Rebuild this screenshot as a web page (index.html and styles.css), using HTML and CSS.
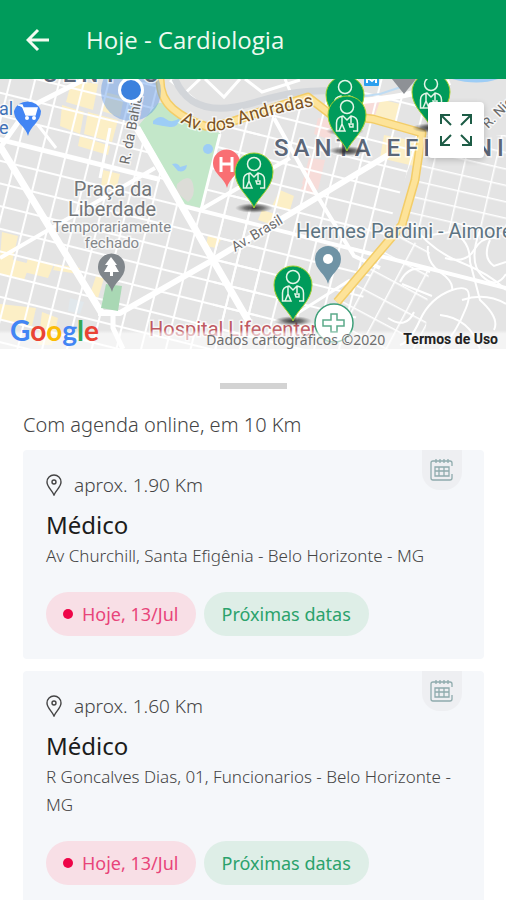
FILE: index.html
```
<!DOCTYPE html>
<html lang="pt-BR">
<head>
    <meta charset="UTF-8">
    <meta name="viewport" content="width=device-width, initial-scale=1.0">
    <title>Hoje - Cardiologia</title>
    <link rel="stylesheet" href="styles.css">
</head>
<body>

<header class="topbar">
    <button type="button" class="back" aria-label="Voltar">
        <svg width="24" height="24" viewBox="0 0 24 24"><path d="M23 12H2M12 2L2 12l10 10" fill="none" stroke="#f3fbf0" stroke-width="3"/></svg>
    </button>
    <h1>Hoje - Cardiologia</h1>
</header>

<section class="map">
    <svg class="map-canvas" viewBox="0 79 506 270" preserveAspectRatio="xMidYMid slice">
        <defs>
            <pattern id="blocks" width="24" height="22" patternUnits="userSpaceOnUse" patternTransform="translate(4 2) rotate(14)">
                <path d="M0 0H24M0 0V22" fill="none" stroke="#fff" stroke-width="4"/>
            </pattern>
            <pattern id="blocksEast" width="30" height="16" patternUnits="userSpaceOnUse" patternTransform="translate(8 4) rotate(13)">
                <path d="M0 0H30M0 0V16" fill="none" stroke="#fff" stroke-width="3"/>
            </pattern>
            <pattern id="blocksSouth" width="24" height="21" patternUnits="userSpaceOnUse" patternTransform="rotate(28)">
                <path d="M0 0H24M0 0V21" fill="none" stroke="#fff" stroke-width="3"/>
            </pattern>
            <radialGradient id="shade">
                <stop offset="0" stop-color="#222" stop-opacity="0.9"/>
                <stop offset="0.5" stop-color="#333" stop-opacity="0.6"/>
                <stop offset="1" stop-color="#555" stop-opacity="0"/>
            </radialGradient>
            <g id="doctor">
                <ellipse cx="0" cy="0" rx="19" ry="5" fill="url(#shade)"/>
                <path d="M0 0C-3 -10 -19 -20 -19 -36A19 19 0 0 1 19 -36C19 -20 3 -10 0 0Z" fill="#009b5b" stroke="#a5d02c" stroke-width="1"/>
                <g fill="none" stroke="#e4f6e8" stroke-width="1.5">
                    <circle cx="0" cy="-44" r="6.5"/>
                    <path d="M-6 -20H-10.500V-28Q-10.500 -34 -4 -35L0 -31L4 -35Q10.500 -34 10.500 -28V-20H6M-5 -34V-27L-8 -20M-5 -27L-2 -20H-8M4 -34V-28M2 -27H6V-24H3Z"/>
                </g>
            </g>
        </defs>

        <rect x="0" y="79" width="506" height="270" fill="#e4e4e4"/>

        <!-- commercial and hospital areas -->
        <g fill="#fcefc6">
            <path d="M72 80L98 84L93 110L66 102ZM62 105L84 112L80 134L60 126ZM88 112L118 120L112 142L84 134ZM105 92L124 97L120 117L102 111ZM80 136L110 146L108 155L78 146ZM103 170L120 174L116 190L101 187Z"/>
            <path d="M2 232L18 236L12 262L0 258ZM0 256L30 264L24 280L0 274ZM28 258L54 264L48 278L24 272ZM0 304L36 308L32 326L0 320ZM55 264L80 268L78 274L53 270ZM96 276L104 278L98 298L90 294ZM42 312L58 318L52 345L38 345Z"/>
            <path d="M375 98L400 104L394 124L370 118ZM384 135L420 142L414 166L380 158ZM280 190L294 196L290 210L272 206ZM262 210L275 214L270 224L258 220ZM208 235L222 238L216 248L206 246ZM345 95L372 98L366 112L345 108Z"/>
        </g>
        <g fill="#f7dcd9">
            <path d="M309 158L325 160L318 190L302 184ZM318 118L334 121L330 140L314 134ZM366 98L380 101L374 118L364 115ZM309 175L318 180L314 195L300 190Z"/>
        </g>
        <path d="M70 298L84 302L80 314L68 311Z" fill="#e1e8ec"/>

        <rect x="0" y="79" width="260" height="270" fill="url(#blocks)"/>
        <path d="M213 260L260 79H440L345 349H213Z" fill="url(#blocks)"/>
        <path d="M423 135H506V240L402 224Z" fill="url(#blocksEast)"/>
        <path d="M400 235L430 250L425 349H345L335 303Z" fill="url(#blocksSouth)"/>
        <path d="M160 79H340V98L300 100L215 124L187 118L165 95Z" fill="#e4e4e4"/>

        <!-- winding streets on the hillside -->
        <g fill="none" stroke="#fff" stroke-width="2">
            <path d="M410 222Q430 250 460 262T506 290M428 246Q426 262 440 272T452 290Q430 298 420 320T400 345"/>
            <path d="M445 258Q466 264 474 250T496 238M470 262L480 300Q500 318 494 330M452 290Q476 282 466 308T440 349"/>
            <path d="M480 230Q468 262 482 276T506 274M490 240Q482 258 494 266L506 262M430 272Q410 262 400 282M414 312Q406 330 388 318"/>
            <path d="M402 284L432 296M440 315Q470 318 480 349M462 300Q486 292 506 304M425 236L450 232Q470 238 470 262"/>
        </g>
        <g fill="none" stroke="#fff" stroke-width="3">
            <path d="M170 80L200 104M182 96L200 79M205 79L224 97L240 79M245 79L262 92L300 80M285 79L292 96"/>
        </g>

        <!-- park -->
        <path d="M139 125L158 103H168L187 123L220 133L201 208L184 204Z" fill="#c3e7c9"/>
        <path d="M177 184Q190 172 193 184T188 202L176 192Z" fill="#dcdcd7"/>
        <g fill="#9dcdf6">
            <path d="M153 121Q160 114 166 119T180 118Q178 128 170 127T153 124ZM172 164Q178 162 180 167L187 165Q186 173 178 171Z"/>
            <circle cx="208" cy="149" r="5"/>
            <path d="M452 79H498Q478 86 452 79Z"/>
        </g>

        <!-- river -->
        <path d="M175 79C185 103 205 112 235 107S290 86 350 92" fill="none" stroke="#d2d5d9" stroke-width="7"/>
        <path d="M350 102Q410 98 450 82" fill="none" stroke="#fff" stroke-width="6"/>
        <path d="M350 98L380 94L425 79" fill="none" stroke="#bfdcf3" stroke-width="2"/>

        <!-- avenues -->
        <g fill="none" stroke="#fff" stroke-linejoin="round">
            <path d="M0 146L101 312M137 128L213 260L249 322" stroke-width="7"/>
            <path d="M98 313H120L213 260L388 155" stroke-width="6"/>
            <path d="M113 314V328L123 349M0 148L28 108L85 79" stroke-width="5"/>
            <path d="M0 258L155 168M0 140L160 180M200 210L290 158" stroke-width="4"/>
            <path d="M183 206L506 288M274 118L318 197L354 256L380 268" stroke-width="4"/>
            <path d="M220 134L201 210M110 128L100 178M38 125L56 148M290 318L350 280" stroke-width="3"/>
        </g>
        <path d="M106 284L122 286L118 311L101 308Z" fill="#a9d8b4"/>
        <g fill="none" stroke-linejoin="round">
            <path d="M160 79Q160 98 173 109T205 126Q218 128 253 114L308 97L330 114L373 119L422 133L415 180L402 225L337 302" stroke="#f3cd68" stroke-width="9"/>
            <path d="M160 79Q160 98 173 109T205 126Q218 128 253 114L308 97L330 114L373 119L422 133L415 180L402 225L337 302" stroke="#fde399" stroke-width="6"/>
        </g>

        <!-- own position -->
        <circle cx="131" cy="91" r="30" fill="#4a8be8" fill-opacity="0.4"/>

        <g class="label">
            <text x="42" y="82" class="district">CENTRO</text>
            <text x="-7" y="115" class="shop">tal</text>
            <text x="-1" y="134" class="shop">e</text>
            <text x="113" y="196" class="place" text-anchor="middle">Praça da</text>
            <text x="112" y="216" class="place" text-anchor="middle">Liberdade</text>
            <text x="112" y="232" class="note" text-anchor="middle">Temporariamente</text>
            <text x="112" y="248" class="note" text-anchor="middle">fechado</text>
            <text x="274" y="156" class="district">SANTA EFIGÊNIA</text>
            <text x="296" y="238" class="clinic">Hermes Pardini - Aimorés</text>
            <text x="149" y="336" class="hospital">Hospital Lifecenter</text>
            <text class="street" transform="translate(129 165) rotate(-79)">R. da Bahia</text>
            <text class="street" transform="translate(235 252) rotate(-31)">Av. Brasil</text>
            <text class="street" transform="translate(488 129) rotate(-45)">R. Niquelina</text>
            <path id="andradas" d="M180 122Q204 138 236 126T320 105" fill="none"/>
            <text class="avenue"><textPath href="#andradas">Av. dos Andradas</textPath></text>
        </g>

        <circle cx="131" cy="90" r="13" fill="#fff"/>
        <circle cx="131" cy="90" r="10" fill="#3b81de"/>

        <!-- places -->
        <path d="M28 136C26 126 14 122 14 111A14 13 0 0 1 41 111C41 122 30 126 28 136Z" fill="#4285f4"/>
        <path d="M18 105H22L26 115H35L37 108H23" fill="#fff" stroke="#fff" stroke-width="1.500"/>
        <circle cx="27" cy="118" r="2" fill="#fff"/><circle cx="34" cy="118" r="2" fill="#fff"/>
        <path d="M227 188C225 178 213 174 213 163A13 13 0 0 1 240 163C240 174 229 178 227 188Z" fill="#f96f73"/>
        <path d="M221 157V172M232 157V172M221 164H232" stroke="#fff" stroke-width="3"/>
        <path d="M112 292C110 282 98 278 98 267A13 13 0 0 1 125 267C125 278 114 282 112 292Z" fill="#80868b"/>
        <path d="M111 257L105 265H108L104 272H110V276H113V272H119L115 265H117Z" fill="#fff"/>
        <path d="M328 284C326 274 315 270 315 259A13 13 0 0 1 341 259C341 270 330 274 328 284Z" fill="#6f93a5"/>
        <circle cx="328" cy="259" r="5" fill="#fff"/>
        <path d="M392 79H416L404 94Z" fill="#8e9196"/>
        <rect x="364" y="72" width="15" height="14" rx="1" fill="#2c9fee"/>
        <path d="M367 83V77L372 81L376 77V83" fill="none" stroke="#fff" stroke-width="2"/>

        <use href="#doctor" x="345" y="131"/>
        <use href="#doctor" x="347" y="151"/>
        <use href="#doctor" x="431" y="128"/>
        <use href="#doctor" x="254" y="208"/>
        <use href="#doctor" x="293" y="321"/>
        <circle cx="334" cy="323" r="19" fill="#fff" stroke="#3e9f79" stroke-width="1.500"/>
        <path d="M331 314H337V320H344V326H337V332H331V326H323V320H331Z" fill="none" stroke="#5cab8b" stroke-width="1.500"/>
    </svg>

    <button type="button" class="expand" aria-label="Expandir mapa">
        <svg width="32" height="32" viewBox="0 0 32 32"><path d="M11 11L2 2M1 10V1H10M21 11L30 2M22 1H31V10M11 21L2 30M1 22V31H10M21 21L30 30M31 22V31H22" fill="none" stroke="#1d5c46" stroke-width="2"/></svg>
    </button>

    <div class="map-footer">
        <span class="google"><span class="g-blue">G</span><span class="g-red">o</span><span class="g-yellow">o</span><span class="g-blue">g</span><span class="g-green">l</span><span class="g-red">e</span></span>
        <span class="copyright">Dados cartográficos ©2020</span>
        <a href="#termos" class="terms">Termos de Uso</a>
    </div>
</section>

<main class="sheet">
    <div class="handle"></div>
    <h2>Com agenda online, em 10 Km</h2>

    <article class="card">
        <div class="agenda">
            <svg width="24" height="24" viewBox="0 0 24 24"><path d="M22 8V5Q22 3 20 3H3Q1 3 1 5V20Q1 22 3 22H20Q22 22 22 20V16M6 1V5M10 1V5M14 1V5M18 1V5M5 9H19V18H5ZM5 13H19M9 9V18M14 9V18" fill="none" stroke="#8fabad" stroke-width="1.300"/></svg>
        </div>
        <p class="distance">
            <svg width="16" height="22" viewBox="0 0 16 22"><path d="M8 21C6 16 1 13 1 8A7 7 0 0 1 15 8C15 13 10 16 8 21Z" fill="none" stroke="#444" stroke-width="1.400"/><circle cx="8" cy="8" r="2" fill="none" stroke="#444" stroke-width="1.400"/></svg>
            aprox. 1.90 Km
        </p>
        <h3>Médico</h3>
        <p class="address">Av Churchill, Santa Efigênia - Belo Horizonte - MG</p>
        <div class="dates">
            <button type="button" class="pill today"><span class="dot"></span>Hoje, 13/Jul</button>
            <button type="button" class="pill next">Próximas datas</button>
        </div>
    </article>

    <article class="card">
        <div class="agenda">
            <svg width="24" height="24" viewBox="0 0 24 24"><path d="M22 8V5Q22 3 20 3H3Q1 3 1 5V20Q1 22 3 22H20Q22 22 22 20V16M6 1V5M10 1V5M14 1V5M18 1V5M5 9H19V18H5ZM5 13H19M9 9V18M14 9V18" fill="none" stroke="#8fabad" stroke-width="1.300"/></svg>
        </div>
        <p class="distance">
            <svg width="16" height="22" viewBox="0 0 16 22"><path d="M8 21C6 16 1 13 1 8A7 7 0 0 1 15 8C15 13 10 16 8 21Z" fill="none" stroke="#444" stroke-width="1.400"/><circle cx="8" cy="8" r="2" fill="none" stroke="#444" stroke-width="1.400"/></svg>
            aprox. 1.60 Km
        </p>
        <h3>Médico</h3>
        <p class="address">R Goncalves Dias, 01, Funcionarios - Belo Horizonte - MG</p>
        <div class="dates">
            <button type="button" class="pill today"><span class="dot"></span>Hoje, 13/Jul</button>
            <button type="button" class="pill next">Próximas datas</button>
        </div>
    </article>
</main>

</body>
</html>
```

FILE: styles.css
```
* {
    box-sizing: border-box;
}

html {
    height: 100%;
    overflow: hidden;
}

body {
    height: 100%;
    margin: 0;
    overflow: hidden;
    display: flex;
    flex-direction: column;
    font-family: "Noto Sans", sans-serif;
    background-color: #fff;
}

h1, h2, h3, p {
    margin: 0;
}

button {
    border: none;
    padding: 0;
    font-family: inherit;
    cursor: pointer;
}

.topbar {
    flex: none;
    display: flex;
    align-items: center;
    gap: 36px;
    padding: 22px 26px;
    background-color: #009b5b;
}

.back {
    display: flex;
    background: none;
}

.topbar h1 {
    color: #eefaf0;
    font-family: "Open Sans", sans-serif;
    font-size: 24px;
    font-weight: 400;
    line-height: 35px;
}

/* Map */
.map {
    flex: none;
    position: relative;
    height: 270px;
    overflow: hidden;
}

.map-canvas {
    display: block;
    width: 100%;
    height: 100%;
}

.label text {
    font-family: Roboto, sans-serif;
    stroke: #fff;
    stroke-opacity: 0.7;
    stroke-width: 3px;
    paint-order: stroke;
}

.label .district {
    font-size: 24px;
    font-weight: 500;
    letter-spacing: 5px;
    fill: #5b6678;
}

.label .shop {
    font-size: 18px;
    fill: #3f72b8;
}

.label .place {
    font-size: 20px;
    fill: #737679;
}

.label .note {
    font-size: 15px;
    fill: #85888b;
}

.label .clinic {
    font-size: 20px;
    fill: #5d7482;
}

.label .hospital {
    font-size: 20px;
    fill: #bf5a62;
}

.label .street {
    font-size: 14px;
    fill: #6b6b6b;
}

.label .avenue {
    font-size: 18px;
    fill: #7d5425;
}

.expand {
    position: absolute;
    top: 23px;
    right: 22px;
    display: flex;
    padding: 12px;
    border-radius: 4px;
    background-color: #fff;
    box-shadow: 0 2px 6px rgba(0, 0, 0, 0.2);
}

.map-footer {
    position: absolute;
    left: 0;
    right: 0;
    bottom: 0;
    display: flex;
    align-items: flex-end;
    padding: 0 8px 0 10px;
    background: linear-gradient(transparent 50%, rgba(255, 255, 255, 0.6) 60%);
}

.google {
    flex: 1;
    font-family: Lato, sans-serif;
    font-size: 28px;
    font-weight: 700;
    line-height: 38px;
}

.g-blue {
    color: #4285f4;
}

.g-red {
    color: #ea4335;
}

.g-yellow {
    color: #fbbc05;
}

.g-green {
    color: #34a853;
}

.copyright, .terms {
    font-size: 14px;
    line-height: 18px;
    color: #6e6e6e;
}

.terms {
    margin-left: 18px;
    font-family: Roboto, sans-serif;
    font-weight: 700;
    line-height: 20px;
    color: #222;
    text-decoration: none;
}

/* Results */
.sheet {
    flex: 1;
    min-height: 0;
    display: flex;
    flex-direction: column;
    gap: 12px;
    padding: 34px 22px 0 23px;
}

.handle {
    flex: none;
    align-self: center;
    width: 67px;
    height: 6px;
    background-color: #d3d3d3;
}

.sheet h2 {
    padding-top: 10px;
    color: #444;
    font-size: 20px;
    font-weight: 300;
    line-height: 27px;
}

.card {
    flex: none;
    position: relative;
    padding: 22px 23px 23px;
    border-radius: 4px;
    background-color: #f5f7fa;
}

.agenda {
    position: absolute;
    top: 0;
    right: 22px;
    display: flex;
    padding: 8px;
    border-radius: 0 0 18px 18px;
    background-color: #eeeff2;
}

.distance {
    display: flex;
    align-items: center;
    gap: 12px;
    color: #444;
    font-size: 19px;
    font-weight: 300;
    line-height: 26px;
}

.card h3 {
    margin-top: 12px;
    color: #1c1c1c;
    font-size: 24px;
    font-weight: 400;
    line-height: 30px;
}

.address {
    margin-top: 2px;
    color: #444;
    font-size: 17px;
    font-weight: 350;
    line-height: 28px;
}

.dates {
    display: flex;
    gap: 8px;
    margin-top: 22px;
}

.pill {
    display: flex;
    align-items: center;
    height: 44px;
    padding: 0 18px;
    border-radius: 22px;
    font-size: 18px;
}

.today {
    padding: 0 17px;
    background-color: #f8dfe6;
    color: #e8457a;
}

.next {
    background-color: #deeee7;
    color: #2ba26c;
}

.dot {
    width: 10px;
    height: 10px;
    margin-right: 9px;
    border-radius: 50%;
    background-color: #ee0548;
}
```
